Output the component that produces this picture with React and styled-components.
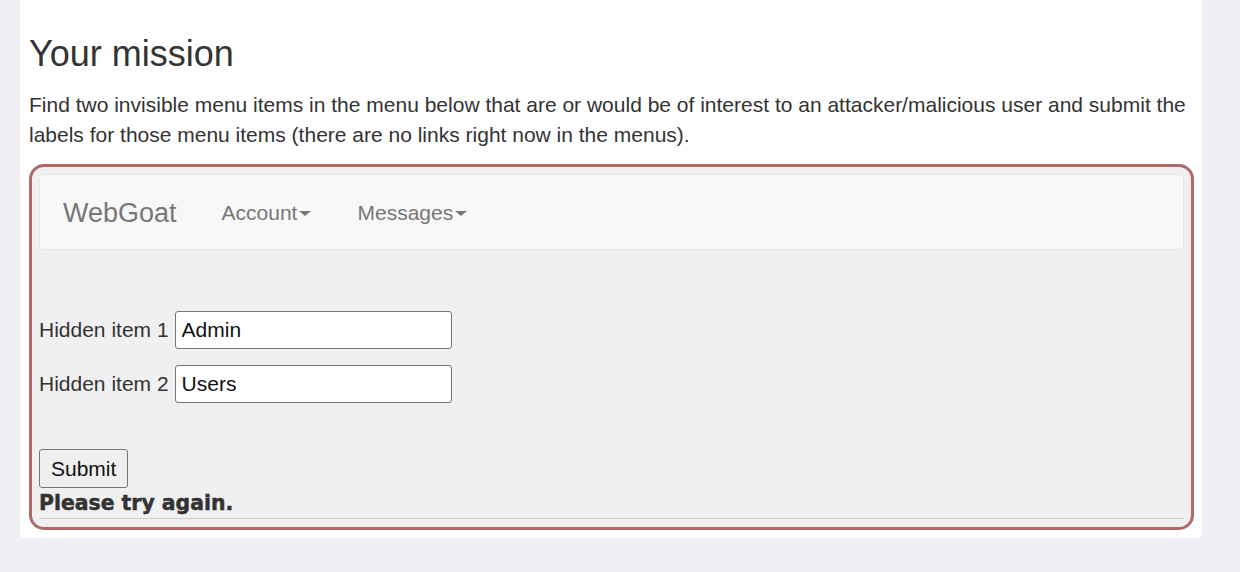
import React from "react";
import styled, { createGlobalStyle } from "styled-components";

const Global = createGlobalStyle`
  html, body { margin: 0; padding: 0; }
  body {
    background: #eff0f4;
    font-family: "Liberation Sans", Arial, sans-serif;
    color: #333;
  }
`;

const Card = styled.div`
  margin-left: 20px;
  width: 1182px;
  background: #fff;
  border-radius: 0 0 5px 5px;
  padding: 30px 8px 8px 9px;
  box-sizing: border-box;
`;

const Title = styled.h2`
  margin: 0;
  font-size: 36px;
  font-weight: 400;
  line-height: 48px;
  color: #333;
`;

const Lead = styled.p`
  margin: 12px 0 14px;
  font-size: 21px;
  line-height: 30px;
  color: #333;
`;

const Mission = styled.div`
  border: 3px solid #b06868;
  border-radius: 15px;
  background: #f0f0f0;
  padding: 7px 7px 8px;
`;

const Navbar = styled.nav`
  display: flex;
  align-items: center;
  height: 74px;
  box-sizing: content-box;
  background: #f8f8f8;
  border: 1px solid #e7e7e7;
  border-radius: 4px;
  padding: 0 23px;
`;

const Brand = styled.span`
  font-size: 27px;
  color: #777;
  margin: 2px 45px 0 0;
`;

const NavItem = styled.span`
  display: flex;
  align-items: center;
  font-size: 21px;
  color: #777;
  margin: 2px 46px 0 0;
`;

const Caret = styled.span`
  display: inline-block;
  width: 0;
  height: 0;
  margin-left: 2px;
  border-top: 5px solid #777;
  border-left: 6px solid transparent;
  border-right: 6px solid transparent;
`;

const Form = styled.form`
  display: flex;
  flex-direction: column;
  align-items: stretch;
  padding-top: 61px;
`;

const Row = styled.div`
  display: flex;
  align-items: center;
  gap: 6px;
  margin-bottom: 16px;
`;

const Label = styled.label`
  font-size: 21px;
  color: #333;
`;

const Input = styled.input`
  width: 277px;
  height: 38px;
  box-sizing: border-box;
  border: 1px solid #767676;
  border-radius: 3px;
  padding: 0 6px;
  font-family: "Liberation Sans", Arial, sans-serif;
  font-size: 21px;
  color: #111;
  background: #fff;
  outline: none;
`;

const Button = styled.button`
  align-self: flex-start;
  margin-top: 30px;
  height: 39px;
  padding: 0 11px;
  border: 1px solid #767676;
  border-radius: 3px;
  background: #efefef;
  font-family: "Liberation Sans", Arial, sans-serif;
  font-size: 21px;
  color: #111;
`;

const Feedback = styled.div`
  font-family: "DejaVu Sans", sans-serif;
  font-weight: 700;
  font-size: 20.4px;
  line-height: 30px;
  color: #333;
  -webkit-text-stroke: 0.5px #333;
`;

const Rule = styled.hr`
  width: 100%;
  margin: 0;
  border: 0;
  border-top: 1px solid #cfcfcf;
`;

export default function App() {
  return (
    <>
      <Global />
      <Card>
        <Title>Your mission</Title>
        <Lead>
          Find two invisible menu items in the menu below that are or would be of interest to an
          attacker/malicious user and submit the labels for those menu items (there are no links
          right now in the menus).
        </Lead>
        <Mission>
          <Navbar>
            <Brand>WebGoat</Brand>
            <NavItem>
              Account<Caret />
            </NavItem>
            <NavItem>
              Messages<Caret />
            </NavItem>
          </Navbar>
          <Form onSubmit={(e) => e.preventDefault()}>
            <Row>
              <Label>Hidden item 1</Label>
              <Input defaultValue="Admin" />
            </Row>
            <Row>
              <Label>Hidden item 2</Label>
              <Input defaultValue="Users" />
            </Row>
            <Button type="submit">Submit</Button>
            <Feedback>Please try again.</Feedback>
            <Rule />
          </Form>
        </Mission>
      </Card>
    </>
  );
}
